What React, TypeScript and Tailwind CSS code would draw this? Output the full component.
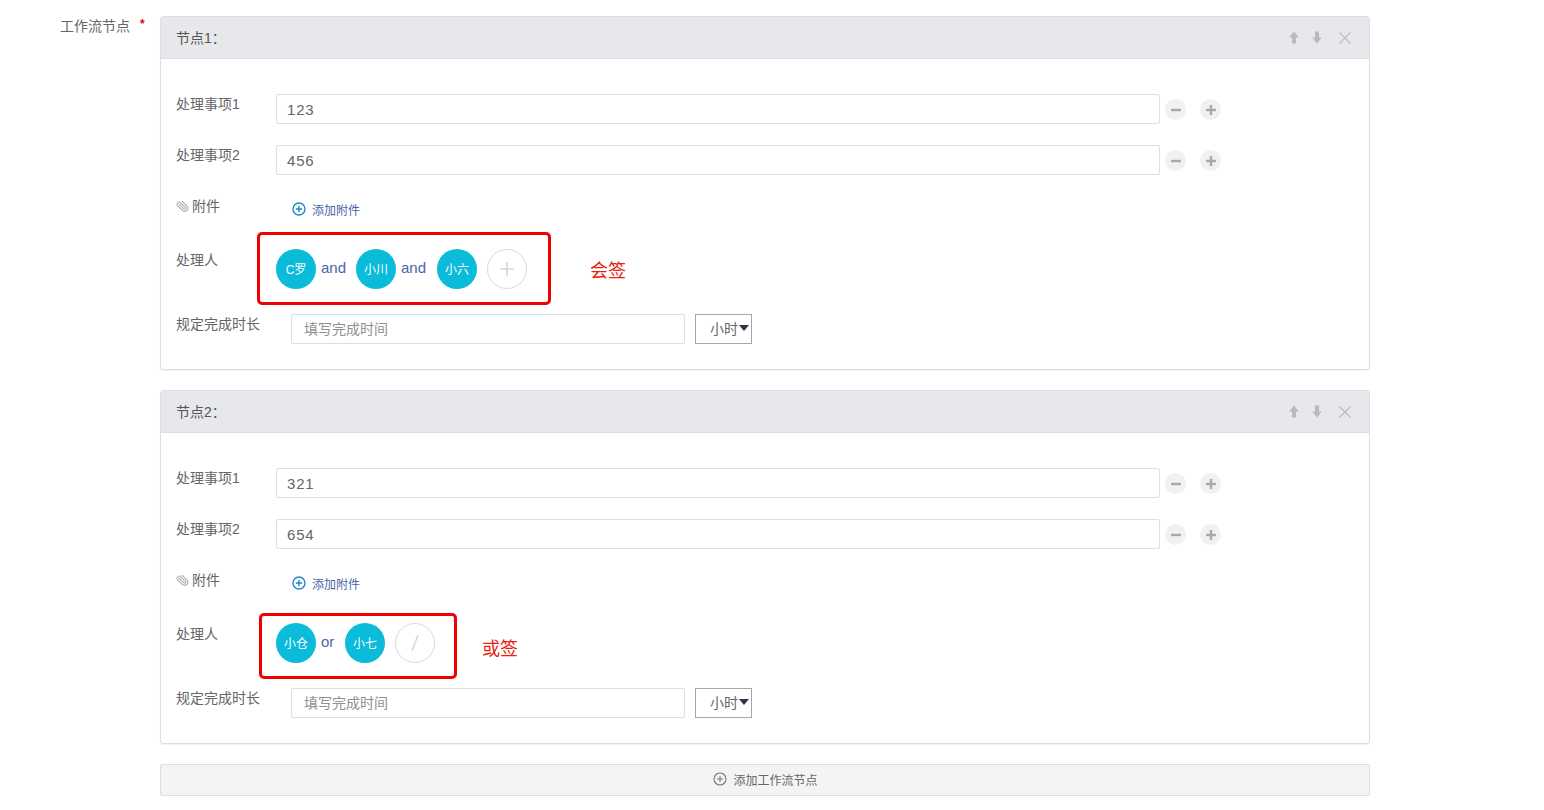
import { Paperclip } from "lucide-react";

const font = "font-['Liberation_Sans','Noto_Sans_CJK_SC',sans-serif]";

function RoundIcon({ type }: { type: "minus" | "plus" }) {
  return (
    <span className="w-[21px] h-[21px] rounded-full bg-[#f1f1f1] flex items-center justify-center">
      <svg width="12" height="12" viewBox="0 0 12 12">
        <rect x="1" y="4.8" width="10" height="2.4" fill="#a9a9a9" />
        {type === "plus" && <rect x="4.8" y="1" width="2.4" height="10" fill="#a9a9a9" />}
      </svg>
    </span>
  );
}

function ItemRow({ label, value }: { label: string; value: string }) {
  return (
    <div className="flex h-[30px]">
      <div className="w-[100px] text-[14px] leading-[20px] text-[#666]">{label}</div>
      <input
        readOnly
        value={value}
        className="w-[884px] h-[30px] border border-[#dcdfe3] rounded-[2px] px-[10px] text-[15px] text-[#666] tracking-[0.8px] outline-none"
      />
      <div className="flex items-center ml-[5px] gap-[14px] pt-[1px]">
        <RoundIcon type="minus" />
        <RoundIcon type="plus" />
      </div>
    </div>
  );
}

function Avatar({ name }: { name: string }) {
  return (
    <span className="w-10 h-10 pt-[1px] rounded-full bg-[#0abbda] text-white text-[12px] flex items-center justify-center shrink-0">
      {name}
    </span>
  );
}

function HeaderArrow({ down }: { down?: boolean }) {
  return (
    <svg width="10" height="13" viewBox="0 0 10 13" className={down ? "rotate-180" : ""}>
      <path d="M5 0.5 L9.8 6.5 H7 V12.5 H3 V6.5 H0.2 Z" fill="#b8babd" />
    </svg>
  );
}

function NodePanel({
  title,
  values,
  box,
  note,
  noteText,
  addOn,
  people,
}: {
  title: string;
  values: string[];
  box: string;
  note: string;
  noteText: string;
  addOn: "plus" | "slash";
  people: React.ReactNode;
}) {
  return (
    <div className="w-[1210px] h-[354px] border border-[#dcdee1] rounded-[3px] bg-white shadow-[0_1px_1px_rgba(0,0,0,0.06)]">
      <div className="h-[42px] bg-[#e6e8eb] border-b border-[#dcdee1] flex items-center pl-[15px] pr-[17px] text-[14px] text-[#555] rounded-t-[3px]">
        <span className="flex-1 pt-[1px]">{title}</span>
        <div className="flex items-center">
          <HeaderArrow />
          <span className="w-[13px]" />
          <HeaderArrow down />
          <svg width="14" height="14" viewBox="0 0 14 14" className="ml-[16px]">
            <path d="M1.5 1.5 L12.5 12.5 M12.5 1.5 L1.5 12.5" stroke="#bdbfc2" strokeWidth="1.4" />
          </svg>
        </div>
      </div>

      <div className="pl-[15px] pt-[35px]">
        <ItemRow label="处理事项1" value={values[0]} />
        <div className="h-[21px]" />
        <ItemRow label="处理事项2" value={values[1]} />

        <div className="flex h-[57px] pt-[21px]">
          <div className="w-[116px] flex text-[14px] leading-[20px] text-[#666]">
            <Paperclip size={13} className="text-[#aaa] mt-[4px] mr-[3px] -rotate-90" />
            附件
          </div>
          <div className="flex h-[20px] items-start pt-[3px]">
            <svg width="14" height="14" viewBox="0 0 14 14" className="mt-[3px]">
              <circle cx="7" cy="7" r="6" fill="none" stroke="#1e88c7" strokeWidth="1.4" />
              <path d="M3.8 7 H10.2 M7 3.8 V10.2" stroke="#1e88c7" strokeWidth="1.4" />
            </svg>
            <span className="ml-[6px] text-[12px] leading-[24px] text-[#4a64a8]">添加附件</span>
          </div>
        </div>

        <div className="relative flex h-[82px]">
          <div className="w-[100px] text-[14px] leading-[20px] text-[#666] pt-[18px]">处理人</div>
          <div className="flex pt-[17px]">
            {people}
            <span className="w-10 h-10 ml-[10px] rounded-full border border-[#d9d9d9] flex items-center justify-center">
              {addOn === "plus" ? (
                <svg width="16" height="16" viewBox="0 0 16 16">
                  <path d="M8 1 V15 M1 8 H15" stroke="#d6d6d6" strokeWidth="1.6" />
                </svg>
              ) : (
                <svg width="16" height="20" viewBox="0 0 16 20">
                  <path d="M11 2 L5 18" stroke="#d6d6d6" strokeWidth="1.6" />
                </svg>
              )}
            </span>
          </div>
          <div className={`absolute border-[3px] border-[#f00000] rounded-[5px] ${box}`} />
          <span className={`absolute text-[18px] leading-[24px] text-[#e8200f] ${note}`}>{noteText}</span>
        </div>

        <div className="flex h-[30px]">
          <div className="w-[115px] text-[14px] leading-[20px] text-[#666]">规定完成时长</div>
          <input
            readOnly
            placeholder="填写完成时间"
            className="w-[394px] h-[30px] border border-[#dcdfe3] rounded-[2px] px-[12px] text-[14px] placeholder:text-[#8f8f8f] outline-none"
          />
          <div className="ml-[10px] w-[57px] h-[30px] pt-[1px] border border-[#a6a6a6] flex items-center pl-[14px] text-[14px] text-[#666]">
            小时
            <svg width="10" height="6" viewBox="0 0 10 6" className="ml-[1px] -mt-[3px]">
              <path d="M0 0 H10 L5 6 Z" fill="#333344" />
            </svg>
          </div>
        </div>
      </div>
    </div>
  );
}

export default function App() {
  return (
    <div className={`${font} w-[1544px] h-[810px] bg-white flex pl-[60px] pt-[16px] overflow-hidden`}>
      <div className="w-[100px] flex items-start text-[14px] leading-[20px] text-[#666]">
        工作流节点
        <span className="ml-[10px] -mt-[2px] text-[12px] font-bold text-[#e60012]">*</span>
      </div>
      <div className="flex flex-col gap-5">
        <NodePanel
          title="节点1："
          values={["123", "456"]}
          box="left-[81px] top-0 w-[294px] h-[73px]"
          note="left-[414px] top-[27px]"
          noteText="会签"
          addOn="plus"
          people={
            <>
              <Avatar name="C罗" />
              <span className="w-[40px] pl-[5px] text-[15px] leading-[38px] h-10 text-[#4a64a8]">and</span>
              <Avatar name="小川" />
              <span className="w-[41px] pl-[5px] text-[15px] leading-[38px] h-10 text-[#4a64a8]">and</span>
              <Avatar name="小六" />
            </>
          }
        />
        <NodePanel
          title="节点2："
          values={["321", "654"]}
          box="left-[83px] top-[7px] w-[198px] h-[66px]"
          note="left-[306px] top-[31px]"
          noteText="或签"
          addOn="slash"
          people={
            <>
              <Avatar name="小仓" />
              <span className="w-[29px] pl-[5px] text-[15px] leading-[38px] h-10 text-[#4a64a8]">or</span>
              <Avatar name="小七" />
            </>
          }
        />
        <div className="w-[1210px] h-[32px] pt-[1px] bg-[#f4f4f4] border border-[#dcdee1] rounded-[2px] flex items-center justify-center text-[12px] text-[#666]">
          <svg width="14" height="14" viewBox="0 0 14 14" className="mr-[6px] -mt-[3px] ml-[1px]">
            <circle cx="7" cy="7" r="6" fill="none" stroke="#777" strokeWidth="1.1" />
            <path d="M4 7 H10 M7 4 V10" stroke="#777" strokeWidth="1.1" />
          </svg>
          添加工作流节点
        </div>
      </div>
    </div>
  );
}
